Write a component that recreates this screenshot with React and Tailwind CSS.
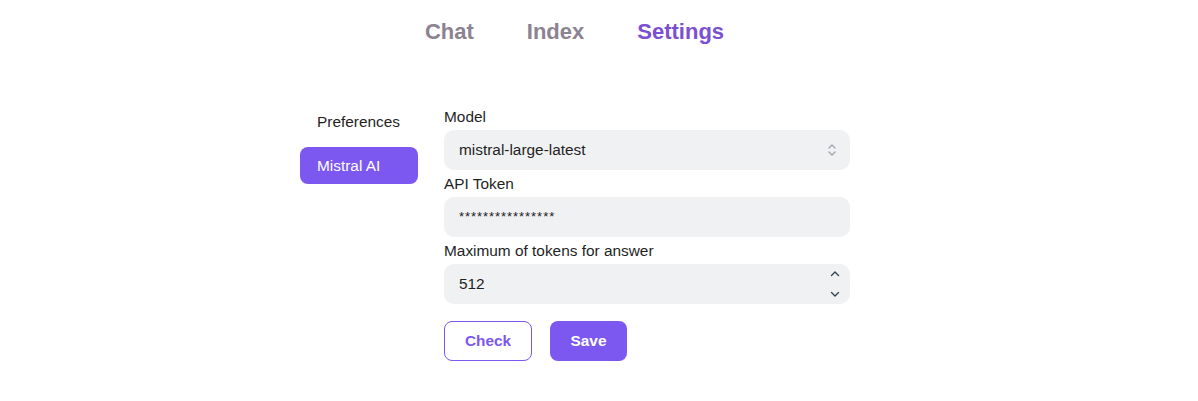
import React, { useState } from 'react';

const FONT = { fontFamily: '"Liberation Sans", Arial, sans-serif' };

function UpDown() {
  return (
    <svg width="10" height="16" viewBox="0 0 10 16" fill="none" stroke="#9ca3af" strokeWidth="1.2" strokeLinecap="round" strokeLinejoin="round">
      <path d="M2 6 L5 3 L8 6" />
      <path d="M2 10 L5 13 L8 10" />
    </svg>
  );
}

function Spinner() {
  return (
    <div className="flex flex-col items-center justify-between h-[32px] py-[2px]">
      <svg width="10" height="7" viewBox="0 0 10 7" fill="none" stroke="#374151" strokeWidth="1.4" strokeLinecap="round" strokeLinejoin="round">
        <path d="M1.5 5.5 L5 2 L8.5 5.5" />
      </svg>
      <svg width="10" height="7" viewBox="0 0 10 7" fill="none" stroke="#374151" strokeWidth="1.4" strokeLinecap="round" strokeLinejoin="round">
        <path d="M1.5 1.5 L5 5 L8.5 1.5" />
      </svg>
    </div>
  );
}

// ── top tabs ──────────────────────────────────────────────────────────────────
function Tabs() {
  const tabs = ['Chat', 'Index', 'Settings'];
  return (
    <nav className="flex justify-center pr-[49px] pt-[20px]">
      <div className="flex gap-[53px]">
        {tabs.map(t => (
          <span
            key={t}
            className={`text-[22px] font-bold leading-6 ${t === 'Settings' ? 'text-[#7b4fd3]' : 'text-[#8b8292]'}`}
          >
            {t}
          </span>
        ))}
      </div>
    </nav>
  );
}

function Label({ children, first }) {
  return (
    <div className={`text-[15.4px] leading-5 text-[#1f1f1f] ${first ? '' : 'mt-[4px]'} mb-[3px]`}>
      {children}
    </div>
  );
}

export default function App() {
  const [section] = useState('Mistral AI');

  return (
    <div className="w-[1198px] h-[401px] bg-white" style={FONT}>
      <Tabs />

      <div className="flex pl-[300px] pt-[59px]">
        {/* Sidebar */}
        <div className="w-[118px] flex flex-col gap-[7px]">
          {['Preferences', 'Mistral AI'].map(s => (
            <div
              key={s}
              className={`h-[37px] flex items-center pl-[17px] rounded-[8px] text-[15.4px] ${
                s === section ? 'bg-[#7c57f0] text-white' : 'text-[#1f1f1f]'
              }`}
            >
              {s}
            </div>
          ))}
        </div>

        {/* Form */}
        <div className="ml-[26px] w-[406px] mt-[4px]">
          <Label first>Model</Label>
          <div className="h-[40px] rounded-[10px] bg-[#f0f1f3] flex items-center justify-between pl-[15px] pr-[13px] text-[15.4px] text-[#1f1f1f]">
            <span>mistral-large-latest</span>
            <UpDown />
          </div>

          <Label>API Token</Label>
          <div className="h-[40px] rounded-[10px] bg-[#f0f1f3] flex items-center pl-[15px] text-[13px] text-[#1f1f1f] tracking-[0.95px]">
            ****************
          </div>

          <Label>Maximum of tokens for answer</Label>
          <div className="h-[40px] rounded-[10px] bg-[#f0f1f3] flex items-center justify-between pl-[15px] pr-[10px] text-[15.4px] text-[#1f1f1f]">
            <span>512</span>
            <Spinner />
          </div>

          <div className="flex gap-[18px] mt-[17px]">
            <button className="w-[88px] h-[40px] rounded-[8px] border border-[#7c57f0] text-[#7c57f0] font-bold text-[15.4px]">
              Check
            </button>
            <button className="w-[77px] h-[40px] rounded-[8px] bg-[#7c57f0] text-white font-bold text-[15.4px]">
              Save
            </button>
          </div>
        </div>
      </div>
    </div>
  );
}
